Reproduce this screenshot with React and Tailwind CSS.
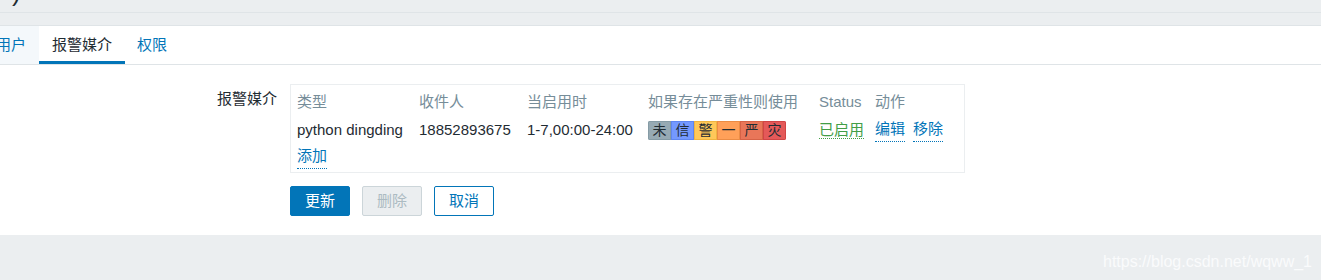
export default function App() {
  const font = { fontFamily: '"Liberation Sans", Arial, "Noto Sans CJK SC", sans-serif' };
  const sev = [
    { t: "未", bg: "bg-[#97aab3]", bd: "border-[#859ba5]" },
    { t: "信", bg: "bg-[#7499ff]", bd: "border-[#5f86f0]" },
    { t: "警", bg: "bg-[#ffc859]", bd: "border-[#f0b440]" },
    { t: "一", bg: "bg-[#ffa059]", bd: "border-[#eb8c45]" },
    { t: "严", bg: "bg-[#e97659]", bd: "border-[#d66246]" },
    { t: "灾", bg: "bg-[#e45959]", bd: "border-[#d04545]" },
  ];
  return (
    <div className="w-[1321px] h-[280px] bg-[#ebeef0] text-[15px] text-[#1f2c33] overflow-hidden" style={font}>
      <div className="h-[13px] overflow-hidden border-b border-[#dfe4e7]">
        <div className="-mt-[23px] -ml-[14px] text-[26px] leading-[30px] text-[#1f2c33]">户)</div>
      </div>
      <div className="h-[13px] border-b border-[#dfe4e7]"></div>
      <div className="bg-white h-[209px] flex flex-col">
        <div className="flex h-[39px] border-b border-[#dfe4e7]">
          <div className="h-full flex items-center pl-0 pr-[13px] -ml-[4px] bg-[#f4f8fb] text-[#0275b8]">用户</div>
          <div className="h-full flex items-center px-[13px] border-b-[3px] border-[#0275b8] -mb-[1px] pt-[3px]">报警媒介</div>
          <div className="h-full flex items-center px-[12px] text-[#0275b8]">权限</div>
        </div>
        <div className="flex pt-[19px]">
          <div className="w-[290px] pr-[13px] text-right pt-[5px] leading-[20px]">报警媒介</div>
          <div className="flex flex-col">
            <div className="w-[675px] border border-[#ebeef0] pt-[3px] pb-[2px] pl-[6px]">
              <div className="flex h-[28px] items-center text-[#768d99]">
                <div className="w-[122px]">类型</div>
                <div className="w-[108px]">收件人</div>
                <div className="w-[121px]">当启用时</div>
                <div className="w-[171px]">如果存在严重性则使用</div>
                <div className="w-[56px]">Status</div>
                <div>动作</div>
              </div>
              <div className="flex h-[28px] items-center">
                <div className="w-[122px]">python dingding</div>
                <div className="w-[108px]">18852893675</div>
                <div className="w-[121px]">1-7,00:00-24:00</div>
                <div className="w-[171px] flex">
                  <div className="flex rounded-[2px] overflow-hidden">
                    {sev.map((s) => (
                      <div key={s.t} className={`w-[23px] h-[19px] flex items-center justify-center text-[14px] leading-none border ${s.bg} ${s.bd}`}>{s.t}</div>
                    ))}
                  </div>
                </div>
                <div className="w-[56px]"><span className="text-[#429e47] border-b border-dotted border-[#429e47]">已启用</span></div>
                <div className="flex gap-[8px]">
                  <span className="text-[#0275b8] border-b border-dotted border-[#0275b8]">编辑</span>
                  <span className="text-[#0275b8] border-b border-dotted border-[#0275b8]">移除</span>
                </div>
              </div>
              <div className="flex h-[26px] items-center">
                <span className="text-[#0275b8] border-b border-dotted border-[#0275b8]">添加</span>
              </div>
            </div>
            <div className="flex gap-[12px] mt-[13px]">
              <div className="w-[60px] h-[30px] rounded-[2px] bg-[#0275b8] border border-[#0275b8] text-white flex items-center justify-center">更新</div>
              <div className="w-[60px] h-[30px] rounded-[2px] bg-[#ebeef0] border border-[#ccd5d9] text-[#acbbc2] flex items-center justify-center">删除</div>
              <div className="w-[60px] h-[30px] rounded-[2px] bg-white border border-[#0275b8] text-[#0275b8] flex items-center justify-center">取消</div>
            </div>
          </div>
        </div>
      </div>
      <div className="h-[45px] flex items-center justify-end pr-[9px] pt-[8px] text-[16px] text-[#fafbfc]">https://blog.csdn.net/wqww_1</div>
    </div>
  );
}
